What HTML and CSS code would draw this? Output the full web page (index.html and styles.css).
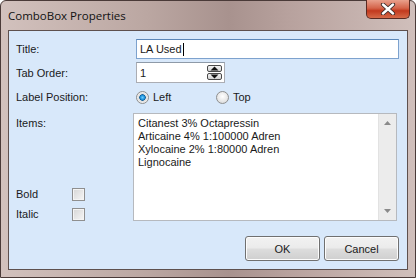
FILE: index.html
```html
<!DOCTYPE html>
<html lang="en">
<head>
    <meta charset="UTF-8">
    <title>ComboBox Properties</title>
    <link rel="stylesheet" href="styles.css">
</head>
<body>
    <div class="window">
        <div class="titlebar">
            <span class="title">ComboBox Properties</span>
            <div class="close-btn">
                <svg width="18" height="12" viewBox="0 0 18 12">
                    <path d="M4 1.5 L14 10.5 M14 1.5 L4 10.5" stroke="#3a2a28" stroke-width="4.2" stroke-linecap="round"/>
                    <path d="M4 1.5 L14 10.5 M14 1.5 L4 10.5" stroke="#ffffff" stroke-width="2.4" stroke-linecap="round"/>
                </svg>
            </div>
        </div>

        <div class="client">
            <div class="form">
                <div class="label">Title:</div>
                <div class="textbox title-box">LA Used<span class="caret"></span></div>

                <div class="label">Tab Order:</div>
                <div class="textbox spin-box">
                    <span>1</span>
                    <div class="spin">
                        <div class="spin-btn"><svg width="9" height="5" viewBox="0 0 9 5"><path d="M0.5 4.5 L4.5 0.5 L8.5 4.5 Z" fill="#111"/></svg></div>
                        <div class="spin-btn"><svg width="9" height="5" viewBox="0 0 9 5"><path d="M0.5 0.5 L4.5 4.5 L8.5 0.5 Z" fill="#111"/></svg></div>
                    </div>
                </div>

                <div class="label">Label Position:</div>
                <div class="radios">
                    <label class="radio"><span class="radio-dot checked"></span>Left</label>
                    <label class="radio"><span class="radio-dot"></span>Top</label>
                </div>

                <div class="left-col">
                    <div class="label">Items:</div>
                    <div class="flags">
                        <div class="flag"><span class="flag-name">Bold</span><span class="checkbox"></span></div>
                        <div class="flag"><span class="flag-name">Italic</span><span class="checkbox"></span></div>
                    </div>
                </div>
                <div class="listbox">
                    <div class="items">
                        <div>Citanest 3% Octapressin</div>
                        <div>Articaine 4% 1:100000 Adren</div>
                        <div>Xylocaine 2% 1:80000 Adren</div>
                        <div>Lignocaine</div>
                    </div>
                    <div class="scrollbar">
                        <svg width="7" height="4" viewBox="0 0 7 4"><path d="M0 4 L3.5 0 L7 4 Z" fill="#8a8a8a"/></svg>
                        <svg width="7" height="4" viewBox="0 0 7 4"><path d="M0 0 L3.5 4 L7 0 Z" fill="#8a8a8a"/></svg>
                    </div>
                </div>
            </div>

            <div class="buttons">
                <div class="button">OK</div>
                <div class="button">Cancel</div>
            </div>
        </div>
    </div>
</body>
</html>
```

FILE: styles.css
```css
body {
    margin: 0;
    background: #ffffff;
    font-family: 'Liberation Sans', Arial, sans-serif;
    font-size: 11px;
    color: #1a1a1a;
}
.window {
    width: 416px;
    height: 278px;
    box-sizing: border-box;
    border: 1px solid #4a3a38;
    border-radius: 6px 6px 0 0;
    background: linear-gradient(90deg, #d2c1bd 0%, #bba7a2 35%, #a8928e 55%, #b8a29e 70%, #d0bfbb 100%);
    display: flex;
    flex-direction: column;
    padding: 0 7px 7px 7px;
}
.titlebar {
    height: 29px;
    display: flex;
    align-items: flex-start;
    justify-content: space-between;
}
.title {
    font-family: 'Open Sans', 'Noto Sans', sans-serif;
    font-size: 11.5px;
    color: #111;
    margin-top: 7px;
}
.close-btn {
    width: 44px;
    height: 19px;
    margin-top: -1px;
    margin-right: -2px;
    box-sizing: border-box;
    border: 1px solid #5a2a22;
    border-top: none;
    border-radius: 0 0 5px 5px;
    background: linear-gradient(180deg, #e9a08c 0%, #d4644a 45%, #c2391e 60%, #d66a48 100%);
    display: flex;
    align-items: center;
    justify-content: center;
}
.client {
    flex: 1;
    box-sizing: border-box;
    border: 1px solid #5e504e;
    background: #d8e8fa;
    padding: 8px 8px 0 7px;
    display: flex;
    flex-direction: column;
}
.form {
    display: grid;
    grid-template-columns: 120px 1fr;
    row-gap: 3px;
    align-items: center;
}
.textbox {
    box-sizing: border-box;
    background: #fff;
    border: 1px solid #abadb3;
    border-top-color: #8e9aa8;
    display: flex;
    align-items: center;
    padding-left: 3px;
}
.title-box {
    height: 20px;
    border-color: #7da2ce;
    border-top-color: #5a86b8;
}
.caret {
    display: inline-block;
    width: 1px;
    height: 13px;
    background: #000;
    margin-left: 1px;
}
.spin-box {
    width: 89px;
    height: 21px;
    justify-content: space-between;
    padding-right: 2px;
}
.spin {
    display: flex;
    flex-direction: column;
    gap: 1px;
}
.spin-btn {
    width: 15px;
    height: 7px;
    box-sizing: border-box;
    border: 1px solid #4a4a4a;
    border-radius: 2px;
    background: linear-gradient(180deg, #f4f4f4, #d4d4d4);
    display: flex;
    align-items: center;
    justify-content: center;
}
.spin-btn svg {
    display: block;
}
.radios {
    display: flex;
    height: 22px;
    align-items: center;
}
.radio {
    display: flex;
    align-items: center;
    width: 80px;
}
.radio-dot {
    width: 13px;
    height: 13px;
    box-sizing: border-box;
    border-radius: 50%;
    border: 1px solid #8e8f8f;
    background: radial-gradient(circle at 50% 40%, #ffffff 0%, #e6e6e6 60%, #cfcfcf 100%);
    margin-right: 4px;
}
.radio-dot.checked {
    background: radial-gradient(circle, #6ed0ff 0%, #1e8ed8 28%, #0b5c98 38%, #dcdcdc 45%, #f4f4f4 75%, #d8d8d8 100%);
}
.left-col {
    align-self: stretch;
    display: flex;
    flex-direction: column;
    justify-content: space-between;
    padding-top: 4px;
    margin-top: 2px;
}
.flags {
    display: flex;
    flex-direction: column;
    margin-bottom: -3px;
}
.flag {
    display: flex;
    align-items: center;
    height: 20px;
}
.flag-name {
    width: 56px;
}
.checkbox {
    width: 13px;
    height: 13px;
    box-sizing: border-box;
    border: 1px solid #8f8f8f;
    background: linear-gradient(135deg, #d6d6d6, #f6f6f6);
    box-shadow: inset 0 0 0 1px #f4f4f4;
}
.listbox {
    height: 108px;
    margin: 2px 2px 0 -3px;
    box-sizing: border-box;
    border: 1px solid #b6b9be;
    background: #fff;
    display: flex;
}
.items {
    flex: 1;
    padding: 3px 0 0 4px;
    line-height: 13px;
}
.scrollbar {
    width: 17px;
    background: #ececec;
    border-left: 1px solid #e2e2e2;
    display: flex;
    flex-direction: column;
    justify-content: space-between;
    align-items: center;
    padding: 7px 0;
}
.scrollbar svg {
    display: block;
}
.buttons {
    display: flex;
    justify-content: flex-end;
    gap: 4px;
    margin-top: 15px;
}
.button {
    width: 75px;
    height: 25px;
    box-sizing: border-box;
    border: 1px solid #707070;
    border-radius: 3px;
    background: linear-gradient(180deg, #f2f2f2 0%, #ebebeb 48%, #dddddd 52%, #cfcfcf 100%);
    box-shadow: inset 0 0 0 1px #fcfcfc;
    display: flex;
    align-items: center;
    justify-content: center;
}
```
